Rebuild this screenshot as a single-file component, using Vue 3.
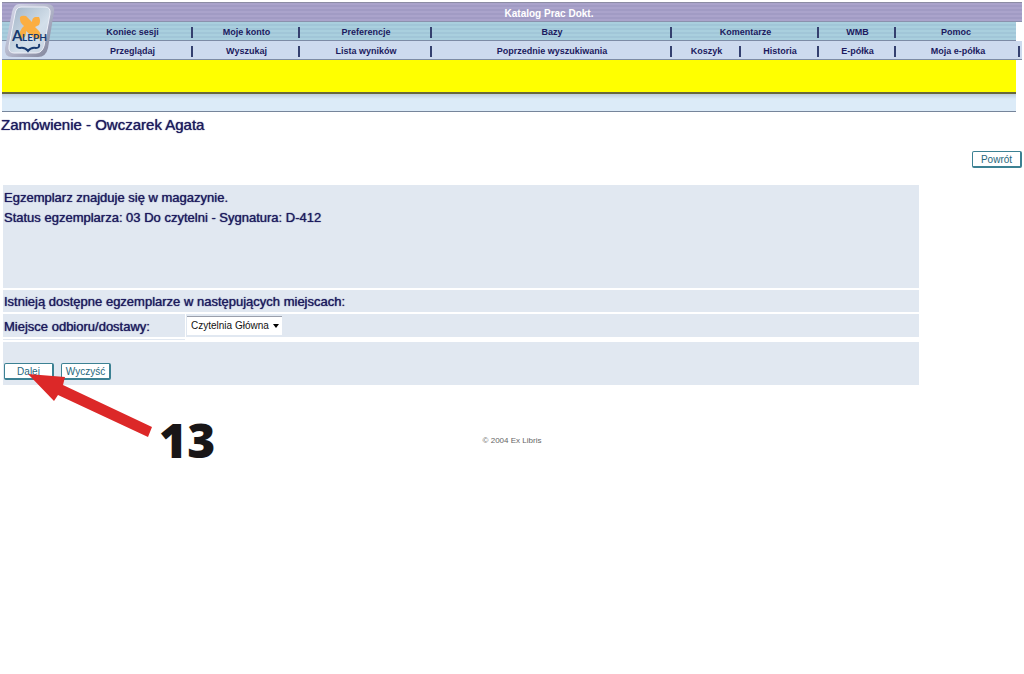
<script setup>
import { ref } from 'vue'

const upper = ['Koniec sesji', 'Moje konto', 'Preferencje', 'Bazy', 'Komentarze', 'WMB', 'Pomoc']
const lower = ['Przeglądaj', 'Wyszukaj', 'Lista wyników', 'Poprzednie wyszukiwania', 'Koszyk', 'Historia', 'E-półka', 'Moja e-półka']
const place = ref('Czytelnia Główna')
</script>

<template>
  <div class="page">
    <header class="header">
      <div class="title">Katalog Prac Dokt.</div>
      <nav class="nav upper" aria-label="Menu sesji">
        <a v-for="item in upper" :key="item" href="#">{{ item }}</a>
      </nav>
      <nav class="nav lower" aria-label="Menu wyszukiwania">
        <a v-for="item in lower" :key="item" href="#">{{ item }}</a>
      </nav>
      <div class="banner"></div>
      <div class="strip"></div>
      <svg class="logo" viewBox="0 0 52 56" role="img" aria-label="Aleph">
        <defs>
          <linearGradient id="frame" x1="0" y1="0" x2="1" y2="1">
            <stop offset="0" stop-color="#d9dbec" />
            <stop offset="0.5" stop-color="#b4b7cb" />
            <stop offset="1" stop-color="#7c8096" />
          </linearGradient>
          <linearGradient id="face" x1="0" y1="0" x2="1" y2="1">
            <stop offset="0" stop-color="#9fb2c4" />
            <stop offset="0.6" stop-color="#d3dfea" />
            <stop offset="1" stop-color="#c6d2e0" />
          </linearGradient>
        </defs>
        <path d="M15 1H43Q51 1 50 9L44 45Q42 54 34 54H8Q0 54 1 45L8 9Q10 1 15 1Z" fill="url(#frame)" />
        <path d="M17 4H41Q47 4 46 11L40 43Q38 50 32 50H10Q4 50 5 43L11 11Q12 4 17 4Z" fill="url(#face)" stroke="#eef0f8" />
        <path d="M16 14Q18 12 22 13L28 19Q28 15 31 14H35Q37 18 35 22L31 24L35 28Q38 32 36 36H31L22 28Q23 33 18 36L15 34Q15 29 18 25L20 23Q15 19 16 14Z" fill="#fbae42" />
        <text x="8" y="38" class="logo-big">A</text>
        <text x="18" y="38" class="logo-small">LEPH</text>
        <path d="M13 41Q12 45 16 45Q21 44 24 48Q27 44 32 45Q36 45 35 41" fill="none" stroke="#173a70" stroke-width="2" />
      </svg>
    </header>

    <main>
      <h1>Zamówienie - Owczarek Agata</h1>
      <div class="back"><button type="button" class="btn">Powrót</button></div>
      <form class="form" @submit.prevent>
        <section class="panel info">
          <p>Egzemplarz znajduje się w magazynie.</p>
          <p>Status egzemplarza: 03 Do czytelni - Sygnatura: D-412</p>
        </section>
        <p class="panel line">Istnieją dostępne egzemplarze w następujących miejscach:</p>
        <div class="pickup">
          <label for="place" class="pickup-label">Miejsce odbioru/dostawy:</label>
          <div class="pickup-field">
            <div class="select-wrap">
              <select id="place" v-model="place">
                <option>Czytelnia Główna</option>
              </select>
              <svg class="caret" viewBox="0 0 6 4" aria-hidden="true"><path d="M0 0H6L3 4Z" /></svg>
            </div>
          </div>
        </div>
        <div class="panel actions">
          <button type="submit" class="btn">Dalej</button>
          <button type="reset" class="btn">Wyczyść</button>
          <svg class="arrow" viewBox="0 0 126 66" aria-hidden="true">
            <path d="M0 0L37 3L35 11L124 53L120 63L30 21L26 27Z" fill="#dc2828" />
          </svg>
          <span class="step">13</span>
        </div>
      </form>
    </main>
    <footer>© 2004 Ex Libris</footer>
  </div>
</template>

<style>
body {
  background: #fff;
}
</style>

<style scoped>
.page {
  box-sizing: border-box;
  min-height: 100vh;
  font-family: "Liberation Sans", Arial, sans-serif;
  color: #1c1a5e;
  padding-top: 2px;
}
.header {
  position: relative;
  padding-left: 2px;
}
.title {
  box-sizing: border-box;
  height: 20px;
  margin-right: 2px;
  padding-left: 74px;
  border-top: 1px solid #8c8ca4;
  border-bottom: 1px solid #8b91ad;
  background: repeating-linear-gradient(#aaa3cb 0 2px, #a19bc4 2px 4px);
  color: #fff;
  font-size: 10px;
  font-weight: 700;
  line-height: 21px;
  text-align: center;
}
.nav {
  display: grid;
  box-sizing: border-box;
  height: 19px;
  padding-left: 70px;
  border-bottom: 1px solid #7d8ba5;
}
.upper {
  grid-template-columns: 121fr 107fr 132fr 240fr 147fr 77fr 120fr;
  margin-right: 8px;
  background: repeating-linear-gradient(#a9cfde 0 2px, #a1c6d8 2px 4px);
}
.lower {
  grid-template-columns: 121fr 107fr 132fr 240fr 69fr 78fr 77fr 124fr;
  margin-right: 2px;
  padding-right: 2px;
  background: #cddaee;
}
.nav a {
  position: relative;
  color: #1c1a5e;
  font-size: 9px;
  font-weight: 700;
  line-height: 20px;
  text-align: center;
  text-decoration: none;
  white-space: nowrap;
}
.nav a::after {
  content: "";
  position: absolute;
  right: 0;
  top: 5px;
  width: 2px;
  height: 11px;
  background: #34406f;
}
.upper a:last-child::after {
  display: none;
}
.banner {
  height: 32px;
  margin-right: 8px;
  background: #ff0;
  border-bottom: 2px solid #68683c;
}
.strip {
  height: 17px;
  margin-right: 8px;
  background: linear-gradient(#bfcddd, #dcebf8 5px);
  border-bottom: 1px solid #76859b;
}
.logo {
  position: absolute;
  left: 4px;
  top: 1px;
  width: 52px;
  height: 56px;
}
.logo-big,
.logo-small {
  font-family: Lato, sans-serif;
  font-weight: 700;
  fill: #173a70;
}
.logo-big {
  font-size: 15px;
}
.logo-small {
  font-size: 10px;
}
h1 {
  margin: 3px 0 1px 1px;
  font-size: 15px;
  font-weight: 400;
  line-height: 20px;
  text-shadow: 0 0 1px #1c1a5e;
}
.back {
  display: flex;
  justify-content: flex-end;
  padding: 15px 2px 17px 0;
}
.btn {
  box-sizing: border-box;
  width: 50px;
  height: 17px;
  padding: 1px 0 0;
  border: 1px solid #3c8193;
  border-right-width: 2px;
  border-bottom-width: 2px;
  border-radius: 2px;
  background: #fff;
  color: #26677c;
  font: 10px/14px "Liberation Sans", Arial, sans-serif;
}
.form {
  margin: 0 105px 0 3px;
  font-size: 13px;
  line-height: 20px;
}
.form p {
  margin: 0;
}
.panel {
  background: #e1e8f1;
}
.info {
  box-sizing: border-box;
  min-height: 103px;
  padding: 3px 1px;
  text-shadow: 0 0 1px #1c1a5e;
}
.form .line {
  margin-top: 2px;
  padding: 2px 1px 0;
  text-shadow: 0 0 1px #1c1a5e;
}
.pickup {
  display: grid;
  grid-template-columns: 183px 1fr;
  margin-top: 2px;
}
.pickup-label {
  margin-right: 1px;
  padding: 3px 1px 0;
  background: #e1e8f1;
  box-shadow: 0 2px 0 #fff, 0 3px 0 #e1e8f1;
  text-shadow: 0 0 1px #1c1a5e;
}
.pickup-field {
  padding: 2px 1px;
  background: #e1e8f1;
}
.select-wrap {
  position: relative;
  width: 95px;
}
select {
  display: block;
  appearance: none;
  box-sizing: border-box;
  width: 100%;
  height: 19px;
  padding: 0 0 0 4px;
  border: 0;
  border-top: 1px solid #9aa0ac;
  border-radius: 0;
  background: #fff;
  color: #111;
  font: 10px/18px "Liberation Sans", Arial, sans-serif;
}
.caret {
  position: absolute;
  right: 3px;
  top: 8px;
  width: 6px;
  height: 4px;
}
.actions {
  position: relative;
  display: flex;
  gap: 7px;
  margin-top: 5px;
  padding: 21px 1px 5px;
}
.arrow {
  position: absolute;
  left: 25px;
  top: 32px;
  width: 126px;
  height: 66px;
}
.step {
  position: absolute;
  left: 156px;
  top: 74px;
  color: #191617;
  font: 800 48px/48px "Open Sans", sans-serif;
}
footer {
  margin-top: 48px;
  color: #666;
  font-size: 8px;
  line-height: 16px;
  text-align: center;
}
</style>
